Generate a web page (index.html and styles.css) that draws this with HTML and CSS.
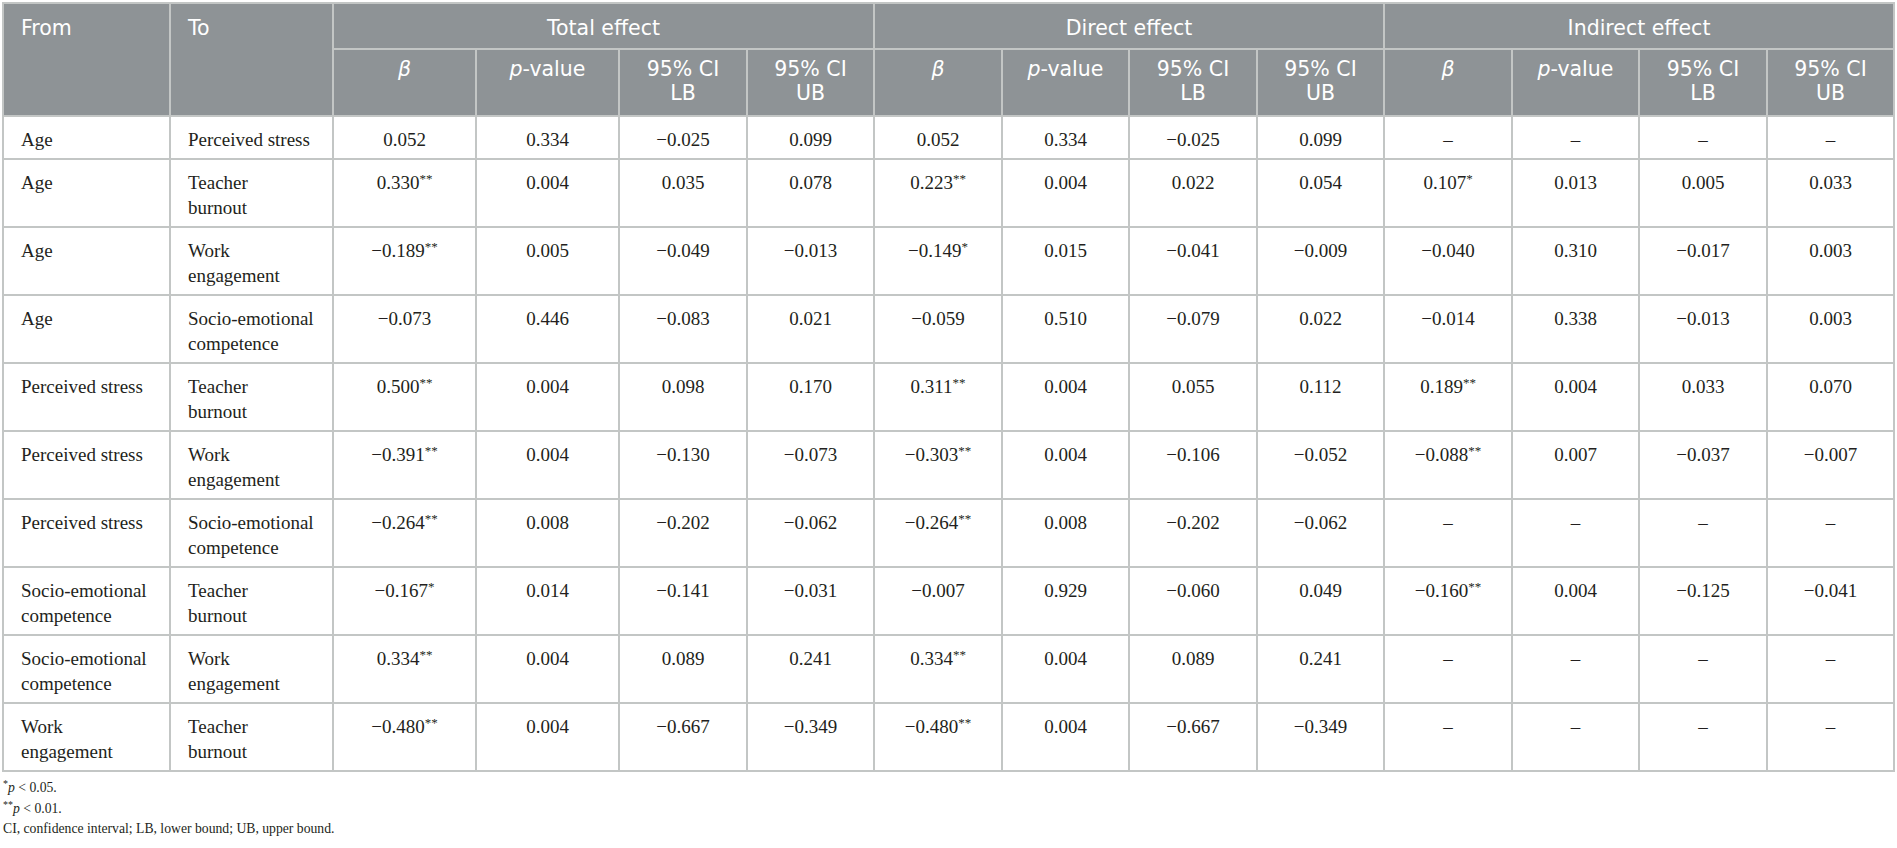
FILE: index.html
```html
<!DOCTYPE html>
<html lang="en">
<head>
  <meta charset="UTF-8" />
  <meta name="viewport" content="width=device-width, initial-scale=1.0"/>
  <title>Total, direct and indirect effects</title>
  <link rel="stylesheet" href="styles.css">
</head>
<body>

  <table class="effects">
    <colgroup>
      <col class="col-from">
      <col class="col-to">
      <col class="col-wide">
      <col class="col-wide">
      <col class="col-a"><col class="col-b">
      <col class="col-a"><col class="col-b">
      <col class="col-a"><col class="col-b">
      <col class="col-a"><col class="col-b">
      <col class="col-a"><col class="col-b">
    </colgroup>
    <thead>
      <tr class="group-row">
        <th rowspan="2" class="lbl">From</th>
        <th rowspan="2" class="lbl">To</th>
        <th colspan="4">Total effect</th>
        <th colspan="4">Direct effect</th>
        <th colspan="4">Indirect effect</th>
      </tr>
      <tr class="sub-row">
        <th><i>β</i></th><th><i>p</i>-value</th><th>95% CI<br>LB</th><th>95% CI<br>UB</th>
        <th><i>β</i></th><th><i>p</i>-value</th><th>95% CI<br>LB</th><th>95% CI<br>UB</th>
        <th><i>β</i></th><th><i>p</i>-value</th><th>95% CI<br>LB</th><th>95% CI<br>UB</th>
      </tr>
    </thead>
    <tbody>
      <tr>
        <td class="lbl">Age</td><td class="lbl">Perceived stress</td>
        <td>0.052</td><td>0.334</td><td>−0.025</td><td>0.099</td>
        <td>0.052</td><td>0.334</td><td>−0.025</td><td>0.099</td>
        <td>–</td><td>–</td><td>–</td><td>–</td>
      </tr>
      <tr>
        <td class="lbl">Age</td><td class="lbl">Teacher<br>burnout</td>
        <td>0.330<sup>**</sup></td><td>0.004</td><td>0.035</td><td>0.078</td>
        <td>0.223<sup>**</sup></td><td>0.004</td><td>0.022</td><td>0.054</td>
        <td>0.107<sup>*</sup></td><td>0.013</td><td>0.005</td><td>0.033</td>
      </tr>
      <tr>
        <td class="lbl">Age</td><td class="lbl">Work<br>engagement</td>
        <td>−0.189<sup>**</sup></td><td>0.005</td><td>−0.049</td><td>−0.013</td>
        <td>−0.149<sup>*</sup></td><td>0.015</td><td>−0.041</td><td>−0.009</td>
        <td>−0.040</td><td>0.310</td><td>−0.017</td><td>0.003</td>
      </tr>
      <tr>
        <td class="lbl">Age</td><td class="lbl">Socio-emotional<br>competence</td>
        <td>−0.073</td><td>0.446</td><td>−0.083</td><td>0.021</td>
        <td>−0.059</td><td>0.510</td><td>−0.079</td><td>0.022</td>
        <td>−0.014</td><td>0.338</td><td>−0.013</td><td>0.003</td>
      </tr>
      <tr>
        <td class="lbl">Perceived stress</td><td class="lbl">Teacher<br>burnout</td>
        <td>0.500<sup>**</sup></td><td>0.004</td><td>0.098</td><td>0.170</td>
        <td>0.311<sup>**</sup></td><td>0.004</td><td>0.055</td><td>0.112</td>
        <td>0.189<sup>**</sup></td><td>0.004</td><td>0.033</td><td>0.070</td>
      </tr>
      <tr>
        <td class="lbl">Perceived stress</td><td class="lbl">Work<br>engagement</td>
        <td>−0.391<sup>**</sup></td><td>0.004</td><td>−0.130</td><td>−0.073</td>
        <td>−0.303<sup>**</sup></td><td>0.004</td><td>−0.106</td><td>−0.052</td>
        <td>−0.088<sup>**</sup></td><td>0.007</td><td>−0.037</td><td>−0.007</td>
      </tr>
      <tr>
        <td class="lbl">Perceived stress</td><td class="lbl">Socio-emotional<br>competence</td>
        <td>−0.264<sup>**</sup></td><td>0.008</td><td>−0.202</td><td>−0.062</td>
        <td>−0.264<sup>**</sup></td><td>0.008</td><td>−0.202</td><td>−0.062</td>
        <td>–</td><td>–</td><td>–</td><td>–</td>
      </tr>
      <tr>
        <td class="lbl">Socio-emotional<br>competence</td><td class="lbl">Teacher<br>burnout</td>
        <td>−0.167<sup>*</sup></td><td>0.014</td><td>−0.141</td><td>−0.031</td>
        <td>−0.007</td><td>0.929</td><td>−0.060</td><td>0.049</td>
        <td>−0.160<sup>**</sup></td><td>0.004</td><td>−0.125</td><td>−0.041</td>
      </tr>
      <tr>
        <td class="lbl">Socio-emotional<br>competence</td><td class="lbl">Work<br>engagement</td>
        <td>0.334<sup>**</sup></td><td>0.004</td><td>0.089</td><td>0.241</td>
        <td>0.334<sup>**</sup></td><td>0.004</td><td>0.089</td><td>0.241</td>
        <td>–</td><td>–</td><td>–</td><td>–</td>
      </tr>
      <tr>
        <td class="lbl">Work<br>engagement</td><td class="lbl">Teacher<br>burnout</td>
        <td>−0.480<sup>**</sup></td><td>0.004</td><td>−0.667</td><td>−0.349</td>
        <td>−0.480<sup>**</sup></td><td>0.004</td><td>−0.667</td><td>−0.349</td>
        <td>–</td><td>–</td><td>–</td><td>–</td>
      </tr>
    </tbody>
  </table>

  <!-- footnotes -->
  <div class="notes">
    <p><sup>*</sup><i>p</i> &lt; 0.05.</p>
    <p><sup>**</sup><i>p</i> &lt; 0.01.</p>
    <p>CI, confidence interval; LB, lower bound; UB, upper bound.</p>
  </div>

</body>
</html>
```

FILE: styles.css
```css
    body {
      font-family: 'Liberation Serif', 'Times New Roman', serif;
      margin: 0;
      padding: 2px;
      background: #fff;
      color: #231f20;
    }

    .effects {
      width: 1893px;
      border-collapse: collapse;
      table-layout: fixed;
      border: 2px solid #c3c6c5;
    }

    .col-from { width: 167px; }
    .col-to { width: 163px; }
    .col-wide { width: 143px; }
    .col-a { width: 128px; }
    .col-b { width: 127px; }

    .effects th,
    .effects td {
      border: 2px solid #c3c6c5;
      text-align: center;
    }

    /* header */
    .effects th {
      font-family: 'DejaVu Sans', 'Open Sans', sans-serif;
      font-weight: normal;
      font-size: 20.5px;
      line-height: 24px;
      color: #fff;
      background: #8e9396;
      vertical-align: top;
    }

    .group-row th {
      padding: 12px 10px 8px;
    }

    .sub-row th {
      padding: 7px 8px 10px;
    }

    .effects th.lbl {
      text-align: left;
      padding-left: 17px;
    }

    /* body cells */
    .effects td {
      font-size: 19px;
      line-height: 25px;
      padding: 10px 8px 6px;
      vertical-align: top;
    }

    .effects td.lbl {
      text-align: left;
      padding-left: 17px;
    }

    .effects sup {
      font-size: 13px;
      line-height: 0;
      vertical-align: 6px;
    }

    .notes {
      padding-top: 6px;
      font-size: 13.7px;
      line-height: 20.6px;
    }

    .notes p {
      margin: 0;
      padding-left: 1px;
    }

    .notes sup {
      font-size: 10px;
      line-height: 0;
      vertical-align: 5px;
    }
```
